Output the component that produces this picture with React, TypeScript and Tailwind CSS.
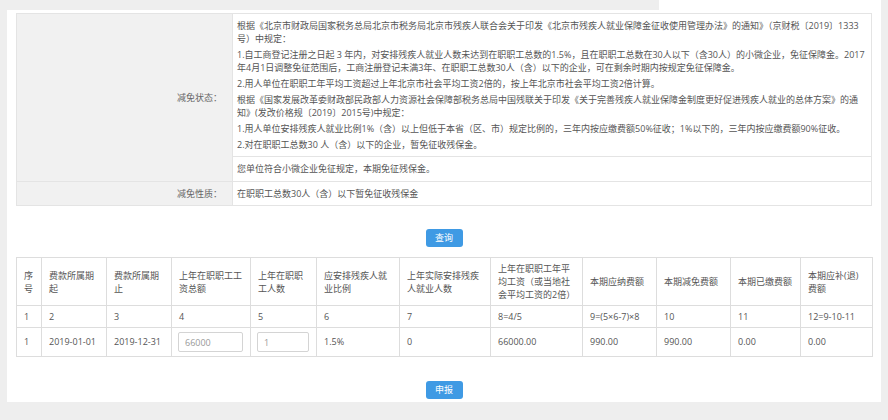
import React from 'react';

const font = { fontFamily: '"Open Sans", "Noto Sans CJK SC", sans-serif' };

const headers = [
  '序号',
  '费款所属期起',
  '费款所属期止',
  '上年在职职工工资总额',
  '上年在职职工人数',
  '应安排残疾人就业比例',
  '上年实际安排残疾人就业人数',
  '上年在职职工年平均工资（或当地社会平均工资的2倍）',
  '本期应纳费额',
  '本期减免费额',
  '本期已缴费额',
  '本期应补(退)费额',
];

const colWidths = [25, 65, 65, 79, 66, 83, 91, 92, 74, 74, 70, 72];

const formula = ['1', '2', '3', '4', '5', '6', '7', '8=4/5', '9=(5×6-7)×8', '10', '11', '12=9-10-11'];

export default function App() {
  return (
    <div className="w-[888px] h-[420px] overflow-hidden bg-[#eeeeee] text-[9px] text-[#555]" style={font}>
      {/* strip of the block above */}
      <div className="flex h-[10px]">
        <div className="flex-1" />
        <div className="w-[222px] bg-white" />
        <div className="w-[7px]" />
      </div>

      <div className="mx-[7px] bg-white px-[9px] pt-[3px] pb-[3px]">
        {/* 减免信息 */}
        <div className="grid grid-cols-[216px_1fr] border border-[#e4e4e4]">
          <div className="flex items-center justify-end bg-[#f1f1f1] pr-[10px] text-[#666] border-r border-[#e4e4e4]">
            减免状态：
          </div>
          <div>
            <div className="px-[4px] py-[5px] leading-[13px] border-b border-[#e4e4e4] flex flex-col gap-[3px]">
              <p className="whitespace-nowrap">
                根据《北京市财政局国家税务总局北京市税务局北京市残疾人联合会关于印发《北京市残疾人就业保障金征收使用管理办法》的通知》（京财税〔2019〕1333
                <br />
                号）中规定：
              </p>
              <p className="whitespace-nowrap">
                1.自工商登记注册之日起 3 年内，对安排残疾人就业人数未达到在职职工总数的1.5%，且在职职工总数在30人以下（含30人）的小微企业，免征保障金。2017
                <br />
                年4月1日调整免征范围后，工商注册登记未满3年、在职职工总数30人（含）以下的企业，可在剩余时期内按规定免征保障金。
              </p>
              <p className="whitespace-nowrap">
                2.用人单位在职职工年平均工资超过上年北京市社会平均工资2倍的，按上年北京市社会平均工资2倍计算。
              </p>
              <p className="whitespace-nowrap">
                根据《国家发展改革委财政部民政部人力资源社会保障部税务总局中国残联关于印发《关于完善残疾人就业保障金制度更好促进残疾人就业的总体方案》的通
                <br />
                知》(发改价格规〔2019〕2015号)中规定：
              </p>
              <p className="whitespace-nowrap">
                1.用人单位安排残疾人就业比例1%（含）以上但低于本省（区、市）规定比例的，三年内按应缴费额50%征收；1%以下的，三年内按应缴费额90%征收。
              </p>
              <p className="whitespace-nowrap">2.对在职职工总数30 人（含）以下的企业，暂免征收残保金。</p>
            </div>
            <div className="h-[24px] flex items-center px-[4px]">您单位符合小微企业免征规定，本期免征残保金。</div>
          </div>
          <div className="h-[24px] flex items-center justify-end bg-[#f1f1f1] pr-[10px] text-[#666] border-t border-r border-[#e4e4e4]">
            减免性质：
          </div>
          <div className="h-[24px] flex items-center px-[4px] border-t border-[#e4e4e4]">
            在职职工总数30人（含）以下暂免征收残保金
          </div>
        </div>

        <div className="flex justify-center pt-[23px] pb-[10px]">
          <button className="w-[37px] h-[18px] rounded-[3px] bg-[#3f9ae4] text-white text-[9px]">查询</button>
        </div>

        {/* 明细表 */}
        <table className="w-[856px] table-fixed border-collapse">
          <colgroup>
            {colWidths.map((w, i) => (
              <col key={i} style={{ width: w }} />
            ))}
          </colgroup>
          <thead>
            <tr className="h-[48px]">
              {headers.map((h) => (
                <th key={h} className="border border-[#dddddd] px-[7px] text-left font-normal leading-[13px] align-middle">
                  {h}
                </th>
              ))}
            </tr>
          </thead>
          <tbody>
            <tr className="h-[22px]">
              {formula.map((f) => (
                <td key={f} className="border border-[#dddddd] px-[7px] whitespace-nowrap">
                  {f}
                </td>
              ))}
            </tr>
            <tr className="h-[29px]">
              <td className="border border-[#dddddd] px-[7px]">1</td>
              <td className="border border-[#dddddd] px-[7px]">2019-01-01</td>
              <td className="border border-[#dddddd] px-[7px]">2019-12-31</td>
              <td className="border border-[#dddddd] px-[6px]">
                <input
                  defaultValue="66000"
                  className="w-[65px] h-[20px] border border-[#d4d4d4] rounded-[2px] px-[6px] text-[9px] text-[#999] outline-none"
                  style={font}
                />
              </td>
              <td className="border border-[#dddddd] px-[6px]">
                <input
                  defaultValue="1"
                  className="w-[52px] h-[20px] border border-[#d4d4d4] rounded-[2px] px-[6px] text-[9px] text-[#999] outline-none"
                  style={font}
                />
              </td>
              <td className="border border-[#dddddd] px-[7px]">1.5%</td>
              <td className="border border-[#dddddd] px-[7px]">0</td>
              <td className="border border-[#dddddd] px-[7px]">66000.00</td>
              <td className="border border-[#dddddd] px-[7px]">990.00</td>
              <td className="border border-[#dddddd] px-[7px]">990.00</td>
              <td className="border border-[#dddddd] px-[7px]">0.00</td>
              <td className="border border-[#dddddd] px-[7px]">0.00</td>
            </tr>
          </tbody>
        </table>

        <div className="flex justify-center pt-[24px]">
          <button className="w-[37px] h-[18px] rounded-[3px] bg-[#3f9ae4] text-white text-[9px]">申报</button>
        </div>
      </div>
    </div>
  );
}
